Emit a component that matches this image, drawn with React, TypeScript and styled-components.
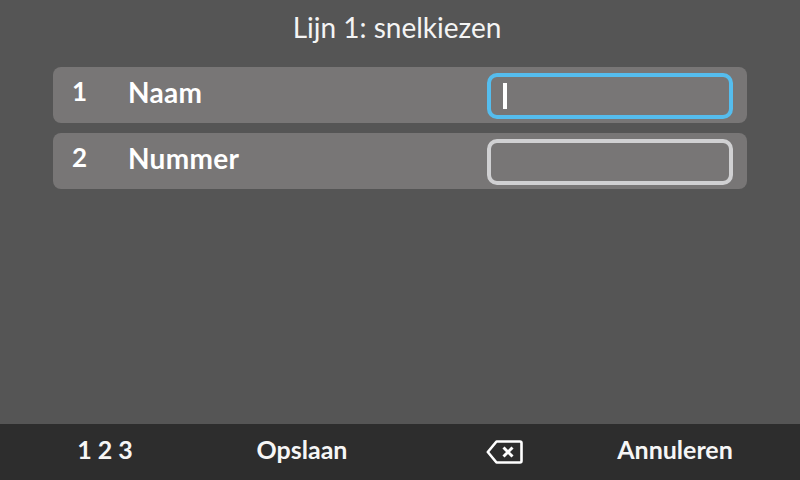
import styled, { createGlobalStyle } from "styled-components";

const rows = [
  { index: 1, label: "Naam", active: true },
  { index: 2, label: "Nummer", active: false },
];

export default function App() {
  return (
    <>
      <GlobalStyle />
      <Screen>
        <Title>Lijn 1: snelkiezen</Title>
        <List>
          {rows.map((row) => (
            <Row key={row.index}>
              <RowIndex>{row.index}</RowIndex>
              <RowLabel>{row.label}</RowLabel>
              <Field $active={row.active}>{row.active && <Caret />}</Field>
            </Row>
          ))}
        </List>
        <Footer>
          <SoftKey $nudge={10}>1 2 3</SoftKey>
          <SoftKey $nudge={4}>Opslaan</SoftKey>
          <SoftKey $nudge={10}>
            <BackspaceIcon width="38" height="26" viewBox="0 0 38 26">
              <path d="M10.5 2.5H34a1.5 1.5 0 0 1 1.5 1.5v18a1.5 1.5 0 0 1-1.5 1.5H10.5L1.8 13z" />
              <path d="M17.5 8.5l9 9M26.5 8.5l-9 9" strokeWidth="3" />
            </BackspaceIcon>
          </SoftKey>
          <SoftKey $nudge={-50}>Annuleren</SoftKey>
        </Footer>
      </Screen>
    </>
  );
}

const GlobalStyle = createGlobalStyle`
  html, body {
    margin: 0;
    padding: 0;
    background: #555555;
  }
`;

const Screen = styled.div`
  width: 800px;
  height: 480px;
  display: flex;
  flex-direction: column;
  background: #555555;
  color: #ffffff;
  font-family: "Lato", "Open Sans", sans-serif;
  overflow: hidden;
`;

const Title = styled.h1`
  margin: 0;
  height: 67px;
  padding: 9px 6px 0 0;
  box-sizing: border-box;
  font-size: 28px;
  line-height: 36px;
  font-weight: 400;
  text-align: center;
  color: #f4f4f4;
`;

const List = styled.section`
  flex: 1;
  display: flex;
  flex-direction: column;
  gap: 10px;
  padding: 0 53px;
`;

const Row = styled.div`
  height: 56px;
  display: flex;
  align-items: center;
  padding: 0 14px 0 19px;
  background: #787676;
  border-radius: 8px;
`;

const RowIndex = styled.span`
  width: 56px;
  font-size: 26px;
  font-weight: 700;
  line-height: 50px;
  margin-bottom: 8px;
`;

const RowLabel = styled.span`
  flex: 1;
  font-size: 28px;
  letter-spacing: 0.3px;
  font-weight: 700;
  line-height: 50px;
  margin-bottom: 6px;
`;

const Field = styled.div<{ $active: boolean }>`
  width: 246px;
  height: 46px;
  margin-top: 1px;
  box-sizing: border-box;
  display: flex;
  align-items: center;
  padding-left: 12px;
  border: 4px solid ${(p) => (p.$active ? "#55bdee" : "#d0d0d2")};
  border-radius: 10px;
`;

const Caret = styled.div`
  width: 4px;
  height: 26px;
  background: #ffffff;
`;

const Footer = styled.footer`
  height: 56px;
  display: grid;
  grid-template-columns: repeat(4, 200px);
  align-items: center;
  background: #2d2d2d;
`;

const SoftKey = styled.div<{ $nudge: number }>`
  display: flex;
  justify-content: center;
  align-items: center;
  padding-left: ${(p) => Math.max(p.$nudge, 0)}px;
  padding-right: ${(p) => Math.max(-p.$nudge, 0)}px;
  padding-bottom: 6px;
  font-size: 25px;
  font-weight: 700;
  color: #f6f6f6;
`;

const BackspaceIcon = styled.svg`
  fill: none;
  stroke: #ffffff;
  stroke-width: 2.6;
  stroke-linejoin: round;
  position: relative;
  top: 3px;
`;
